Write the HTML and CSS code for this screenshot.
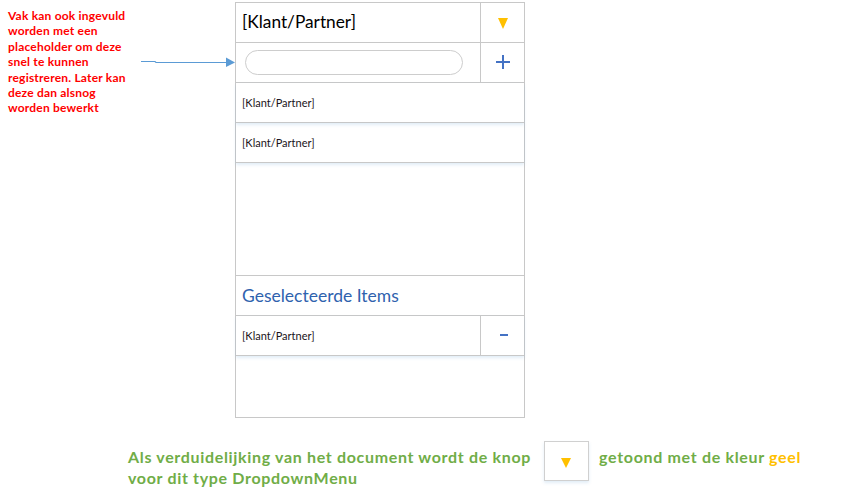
FILE: index.html
```html
<!DOCTYPE html>
<html lang="nl">
<head>
<meta charset="utf-8">
<title>DropdownMenu</title>
<link rel="stylesheet" href="styles.css">
</head>
<body>
<div class="top">
  <div class="note">Vak kan ook ingevuld<br>worden met een<br>placeholder om deze<br>snel te kunnen<br>registreren. Later kan<br>deze dan alsnog<br>worden bewerkt</div>
  <svg class="arrow" width="94" height="10" viewBox="0 0 94 10">
    <path d="M0 4.5H14L15 5.5H86" stroke="#5b9bd5" stroke-width="1.2" fill="none"/>
    <path d="M85 0.5L94 5.5L85 10Z" fill="#5b9bd5"/>
  </svg>
  <div class="panel">
    <div class="row">
      <div class="cell title">[Klant/Partner]</div>
      <div class="btn"><span class="tri"></span></div>
    </div>
    <div class="row">
      <div class="cell"><div class="search"></div></div>
      <div class="btn"><span class="plus"></span></div>
    </div>
    <div class="row item shadow"><div class="cell">[Klant/Partner]</div></div>
    <div class="row item shadow"><div class="cell">[Klant/Partner]</div></div>
    <div class="spacer"></div>
    <div class="row"><div class="cell heading">Geselecteerde Items</div></div>
    <div class="row item shadow">
      <div class="cell">[Klant/Partner]</div>
      <div class="btn"><span class="minus"></span></div>
    </div>
  </div>
</div>
<p class="legend">Als verduidelijking van het document wordt de knop <span class="legend-btn"><span class="tri"></span></span> getoond met de kleur <span class="geel">geel</span><br>voor dit type DropdownMenu</p>
</body>
</html>
```
FILE: styles.css
```css
html, body {
  margin: 0;
  padding: 0;
  background: #ffffff;
}
body {
  font-family: Lato, "Open Sans", sans-serif;
  width: 841px;
  height: 502px;
  overflow: hidden;
}
.top {
  display: flex;
  align-items: flex-start;
  padding-top: 2px;
}
.note {
  width: 133px;
  padding-left: 8px;
  margin-top: 6px;
  font-size: 12px;
  line-height: 15.4px;
  font-weight: bold;
  color: #ff0000;
  white-space: nowrap;
  letter-spacing: 0.2px;
}
.arrow {
  display: block;
  margin-top: 55px;
}
.panel {
  width: 290px;
  height: 416px;
  box-sizing: border-box;
  border: 1px solid #c8c8c8;
  display: flex;
  flex-direction: column;
}
.row {
  height: 40px;
  flex: none;
  box-sizing: border-box;
  border-bottom: 1px solid #c8c8c8;
  display: flex;
}
.shadow {
  box-shadow: 0 2px 3px rgba(91, 155, 213, 0.18);
  position: relative;
}
.cell {
  flex: 1;
  display: flex;
  align-items: center;
  padding-left: 6px;
  font-size: 11px;
  color: #1a1420;
}
.title {
  font-size: 17.3px;
  color: #000000;
  padding-bottom: 2px;
}
.heading {
  font-size: 17.5px;
  color: #2f62ae;
  padding-bottom: 1px;
}
.spacer {
  height: 113px;
  flex: none;
  box-sizing: border-box;
  border-bottom: 1px solid #c8c8c8;
}
.search {
  width: 218px;
  height: 25px;
  box-sizing: border-box;
  border: 1px solid #cdcdcd;
  border-radius: 13px;
  margin-left: 3px;
  margin-bottom: 1px;
}
.btn {
  width: 44px;
  flex: none;
  box-sizing: border-box;
  border-left: 1px solid #c8c8c8;
  display: flex;
  align-items: center;
  justify-content: center;
}
.tri {
  width: 0;
  height: 0;
  border-left: 5.5px solid transparent;
  border-right: 5.5px solid transparent;
  border-top: 11px solid #ffc000;
  margin-top: 2px;
}
.plus {
  width: 14px;
  height: 14px;
  background:
    linear-gradient(#4472c4, #4472c4) center / 14px 2px no-repeat,
    linear-gradient(#4472c4, #4472c4) center / 2px 14px no-repeat;
  margin-bottom: 1px;
}
.minus {
  width: 8px;
  height: 2px;
  background: #4472c4;
  margin-left: 2px;
  margin-bottom: 1px;
}
.legend {
  margin: 0;
  padding-left: 128px;
  padding-top: 29px;
  font-size: 16px;
  line-height: 19px;
  font-weight: bold;
  color: #70ad47;
  white-space: nowrap;
  letter-spacing: 0.67px;
}
.legend-btn {
  display: inline-flex;
  align-items: center;
  justify-content: center;
  vertical-align: middle;
  width: 45px;
  height: 40px;
  box-sizing: border-box;
  border: 1px solid #d0d0d0;
  box-shadow: 0 2px 3px rgba(91, 155, 213, 0.18);
  margin: -9px 6px -13px 8px;
}
.legend-btn .tri {
  border-left-width: 5px;
  border-right-width: 5px;
  border-top-width: 10px;
  margin-top: 4px;
}
.geel {
  color: #ffc000;
}
```
